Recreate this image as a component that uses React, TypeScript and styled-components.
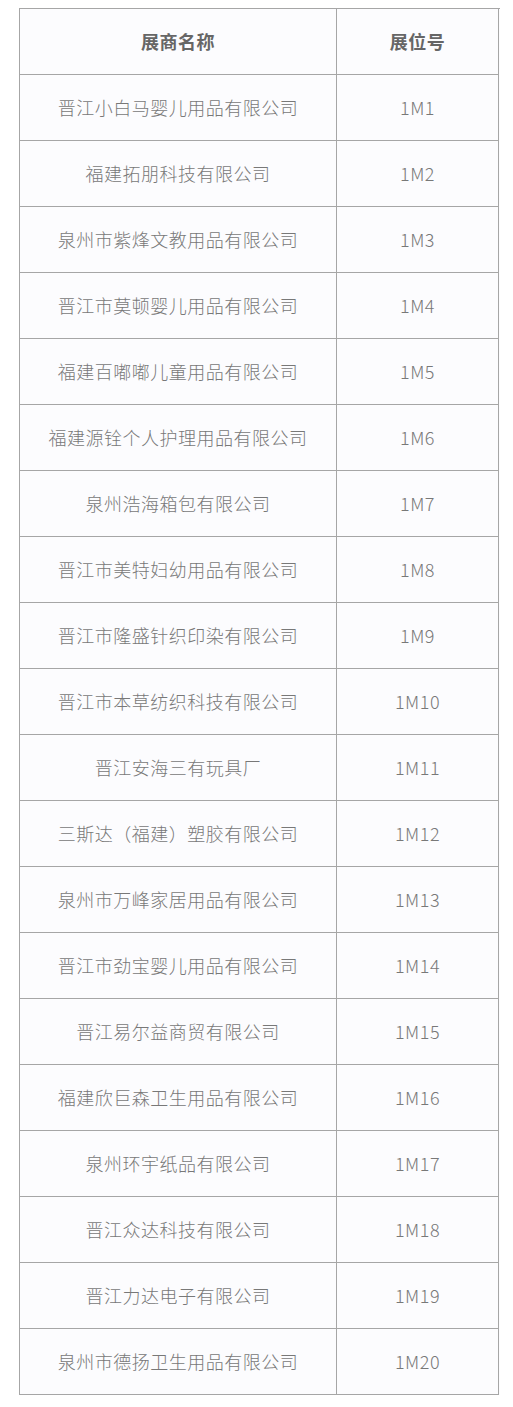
import { Fragment } from "react";
import styled, { createGlobalStyle } from "styled-components";

const rows: [string, string][] = [
  ["晋江小白马婴儿用品有限公司", "1M1"],
  ["福建拓朋科技有限公司", "1M2"],
  ["泉州市紫烽文教用品有限公司", "1M3"],
  ["晋江市莫顿婴儿用品有限公司", "1M4"],
  ["福建百嘟嘟儿童用品有限公司", "1M5"],
  ["福建源铨个人护理用品有限公司", "1M6"],
  ["泉州浩海箱包有限公司", "1M7"],
  ["晋江市美特妇幼用品有限公司", "1M8"],
  ["晋江市隆盛针织印染有限公司", "1M9"],
  ["晋江市本草纺织科技有限公司", "1M10"],
  ["晋江安海三有玩具厂", "1M11"],
  ["三斯达（福建）塑胶有限公司", "1M12"],
  ["泉州市万峰家居用品有限公司", "1M13"],
  ["晋江市劲宝婴儿用品有限公司", "1M14"],
  ["晋江易尔益商贸有限公司", "1M15"],
  ["福建欣巨森卫生用品有限公司", "1M16"],
  ["泉州环宇纸品有限公司", "1M17"],
  ["晋江众达科技有限公司", "1M18"],
  ["晋江力达电子有限公司", "1M19"],
  ["泉州市德扬卫生用品有限公司", "1M20"],
];

const GlobalStyle = createGlobalStyle`
  body {
    margin: 0;
    background: #ffffff;
    font-family: "Noto Sans CJK SC", "Noto Sans", sans-serif;
  }
`;

const Page = styled.div`
  padding: 8px 0 13px 19px;
`;

const Grid = styled.div`
  display: grid;
  grid-template-columns: 317px 162px;
  width: 480px;
  border-top: 1px solid #a6a6a6;
  border-left: 1px solid #a6a6a6;
  background: #fcfcfe;
`;

const Cell = styled.div<{ $head?: boolean }>`
  box-sizing: border-box;
  height: 66px;
  padding-bottom: 1px;
  display: flex;
  align-items: center;
  justify-content: center;
  border-right: 1px solid #a6a6a6;
  border-bottom: 1px solid #a6a6a6;
  font-size: 18px;
  letter-spacing: 0.5px;
  color: ${(p) => (p.$head ? "#666666" : "#787878")};
  font-weight: ${(p) => (p.$head ? 700 : 300)};
  white-space: nowrap;
`;

export default function App() {
  return (
    <Page>
      <GlobalStyle />
      <Grid>
        <Cell $head>展商名称</Cell>
        <Cell $head>展位号</Cell>
        {rows.map(([name, booth]) => (
          <Fragment key={booth}>
            <Cell>{name}</Cell>
            <Cell>{booth}</Cell>
          </Fragment>
        ))}
      </Grid>
    </Page>
  );
}
